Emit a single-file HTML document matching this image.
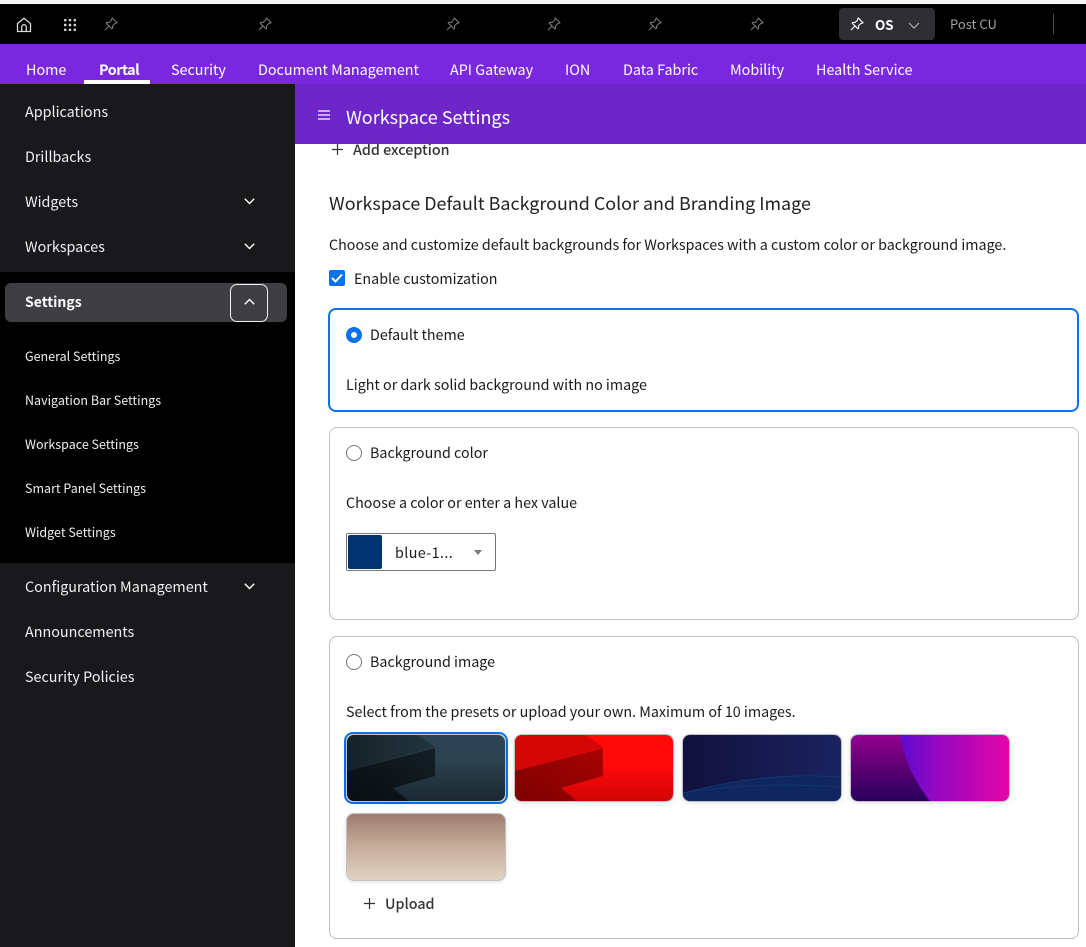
<!DOCTYPE html>
<html><head><meta charset="utf-8">
<style>
html,body{margin:0;padding:0;width:1086px;height:947px;overflow:hidden;background:#fff;}
body{position:relative;font-family:"Noto Sans CJK JP","Liberation Sans",sans-serif;color:#1a1a1e;font-size:14.3px;}
.a{position:absolute;white-space:nowrap;}
.t{position:absolute;white-space:nowrap;line-height:20px;}
svg{position:absolute;overflow:visible;}
.nav{color:#fff;font-size:14.35px;top:60px;}
.side{color:#f0f0f2;font-size:14.35px;}
.sub{color:#f0f0f2;font-size:12.5px;}
.card{position:absolute;left:329px;width:748px;border:1px solid #bfbfc4;border-radius:8px;box-sizing:content-box;background:#fff;}
.radio{position:absolute;width:14px;height:14px;border:1px solid #77777c;border-radius:50%;background:#fff;}
.th{position:absolute;width:158px;height:66px;border:1px solid #c0c0c8;border-radius:8px;box-shadow:0 1px 4px rgba(0,0,0,.12);overflow:hidden;}
.th svg{left:0;top:0;}
</style></head>
<body>
<div class="a" style="left:0;top:0;width:1086px;height:4px;background:#f6f6f6"></div>
<div class="a" style="left:0;top:4px;width:1086px;height:40px;background:#000"></div>
<div class="a" style="left:0;top:44px;width:1086px;height:40px;background:#7a28e0"></div>

<!-- top icons -->
<svg style="left:16px;top:17px" width="16" height="16" viewBox="0 0 16 16" fill="none" stroke="#d8d8d8" stroke-width="1.3"><path d="M1.500 6.500 8 1.200l6.500 5.300V14.500h-13z"/><path d="M5.700 14.500V10a2.300 2.300 0 0 1 4.600 0v4.500"/></svg>
<svg style="left:63px;top:18px" width="14" height="14" viewBox="0 0 14 14" fill="#d8d8d8"><rect x="1" y="1" width="2.400" height="2.400" rx=".6"/><rect x="5.800" y="1" width="2.400" height="2.400" rx=".6"/><rect x="10.600" y="1" width="2.400" height="2.400" rx=".6"/><rect x="1" y="5.800" width="2.400" height="2.400" rx=".6"/><rect x="5.800" y="5.800" width="2.400" height="2.400" rx=".6"/><rect x="10.600" y="5.800" width="2.400" height="2.400" rx=".6"/><rect x="1" y="10.600" width="2.400" height="2.400" rx=".6"/><rect x="5.800" y="10.600" width="2.400" height="2.400" rx=".6"/><rect x="10.600" y="10.600" width="2.400" height="2.400" rx=".6"/></svg>
<svg width="0" height="0"><defs><g id="pin" fill="none" stroke-width="1.1"><path d="M8.300 1 13 5.700l-1 .6-1 0L8.400 9l.3 2-.8.8L2.200 6.100l.8-.8 2 .3L7.700 3V2z"/><path d="M4.800 9.200 1 13"/></g></defs></svg>
<svg style="left:104px;top:17px;stroke:#77777a" width="14" height="14" viewBox="0 0 14 14"><use href="#pin"/></svg>
<svg style="left:258px;top:17px;stroke:#77777a" width="14" height="14" viewBox="0 0 14 14"><use href="#pin"/></svg>
<svg style="left:446px;top:17px;stroke:#77777a" width="14" height="14" viewBox="0 0 14 14"><use href="#pin"/></svg>
<svg style="left:547px;top:17px;stroke:#77777a" width="14" height="14" viewBox="0 0 14 14"><use href="#pin"/></svg>
<svg style="left:648px;top:17px;stroke:#77777a" width="14" height="14" viewBox="0 0 14 14"><use href="#pin"/></svg>
<svg style="left:750px;top:17px;stroke:#77777a" width="14" height="14" viewBox="0 0 14 14"><use href="#pin"/></svg>

<div class="a" style="left:839px;top:8px;width:96px;height:32px;background:#2f2f33;border-radius:4px"></div>
<svg style="left:850px;top:17px;stroke:#fff" width="14" height="14" viewBox="0 0 14 14"><use href="#pin"/></svg>
<div class="t" style="left:875px;top:14px;color:#fff;font-weight:700;font-size:13.500px;letter-spacing:-.3px">OS</div>
<svg style="left:908px;top:22px" width="12" height="8" viewBox="0 0 12 8" fill="none" stroke="#b0b0b4" stroke-width="1.2"><path d="M1 1l5 5 5-5"/></svg>
<div class="t" style="left:950px;top:14px;color:#a4a4a8;font-size:13px">Post CU</div>
<div class="a" style="left:1053px;top:14px;width:1px;height:20px;background:#48484c"></div>

<!-- nav -->
<div class="t nav" style="left:26px">Home</div>
<div class="t nav" style="left:99px;font-weight:700;letter-spacing:-.5px">Portal</div>
<div class="a" style="left:84px;top:80px;width:66px;height:4px;background:#fff"></div>
<div class="t nav" style="left:171px">Security</div>
<div class="t nav" style="left:258px">Document Management</div>
<div class="t nav" style="left:450px">API Gateway</div>
<div class="t nav" style="left:565px">ION</div>
<div class="t nav" style="left:623px">Data Fabric</div>
<div class="t nav" style="left:730px">Mobility</div>
<div class="t nav" style="left:816px">Health Service</div>

<!-- sidebar -->
<div class="a" style="left:0;top:84px;width:295px;height:863px;background:#19191c"></div>
<div class="a" style="left:0;top:272px;width:295px;height:291px;background:#000"></div>
<div class="a" style="left:5px;top:283px;width:282px;height:39px;background:#3e3e43;border-radius:6px"></div>
<div class="a" style="left:230px;top:284px;width:36px;height:36px;border:1px solid #f0f0f0;border-radius:7px"></div>

<div class="t side" style="left:25px;top:102px">Applications</div>
<div class="t side" style="left:25px;top:147px">Drillbacks</div>
<div class="t side" style="left:25px;top:192px">Widgets</div>
<div class="t side" style="left:25px;top:237px">Workspaces</div>
<div class="t side" style="left:25px;top:292px;font-weight:700;color:#fff;font-size:14px">Settings</div>
<div class="t sub" style="left:25px;top:346px">General Settings</div>
<div class="t sub" style="left:25px;top:390px">Navigation Bar Settings</div>
<div class="t sub" style="left:25px;top:434px">Workspace Settings</div>
<div class="t sub" style="left:25px;top:478px">Smart Panel Settings</div>
<div class="t sub" style="left:25px;top:522px">Widget Settings</div>
<div class="t side" style="left:25px;top:577px">Configuration Management</div>
<div class="t side" style="left:25px;top:622px">Announcements</div>
<div class="t side" style="left:25px;top:667px">Security Policies</div>
<svg style="left:244px;top:198px" width="11" height="7" viewBox="0 0 11 7" fill="none" stroke="#fff" stroke-width="1.4"><path d="M.8.8l4.700 4.700L10.200.8"/></svg>
<svg style="left:244px;top:243px" width="11" height="7" viewBox="0 0 11 7" fill="none" stroke="#fff" stroke-width="1.4"><path d="M.8.8l4.700 4.700L10.200.8"/></svg>
<svg style="left:244px;top:583px" width="11" height="7" viewBox="0 0 11 7" fill="none" stroke="#fff" stroke-width="1.4"><path d="M.8.8l4.700 4.700L10.200.8"/></svg>
<svg style="left:244px;top:298px" width="11" height="7" viewBox="0 0 11 7" fill="none" stroke="#fff" stroke-width="1.4"><path d="M.8 6.200 5.500 1.500l4.700 4.700"/></svg>

<!-- header -->
<div class="a" style="left:295px;top:84px;width:791px;height:60px;background:#6d26c7"></div>
<svg style="left:318px;top:110px" width="12" height="10" viewBox="0 0 12 10" stroke="#fff" stroke-width="1.2"><path d="M0 1h12M0 5h12M0 9h12"/></svg>
<div class="t" style="left:346px;top:104px;color:#fff;font-size:18px;line-height:26px">Workspace Settings</div>

<!-- content -->
<svg style="left:332px;top:144px" width="11" height="11" viewBox="0 0 11 11" stroke="#333" stroke-width="1.2"><path d="M5.500 0v11M0 5.500h11"/></svg>
<div class="t" style="left:353px;top:140px;font-weight:500;color:#333;font-size:14.3px">Add exception</div>
<div class="t" style="left:329px;top:191px;font-size:17.9px;line-height:25px;color:#222">Workspace Default Background Color and Branding Image</div>
<div class="t" style="left:329px;top:235px">Choose and customize default backgrounds for Workspaces with a custom color or background image.</div>
<div class="a" style="left:329px;top:270px;width:16px;height:16px;background:#0a72ea;border-radius:2px"></div>
<svg style="left:331px;top:273px" width="12" height="10" viewBox="0 0 12 10" fill="none" stroke="#fff" stroke-width="2"><path d="M1 5l3.500 3.500L11 1.500"/></svg>
<div class="t" style="left:354px;top:269px">Enable customization</div>

<div class="card" style="top:308px;left:328px;width:747px;height:100px;border:2px solid #0a72ea"></div>
<div class="a" style="left:346px;top:327px;width:16px;height:16px;box-sizing:border-box;border:5px solid #0a72ea;border-radius:50%;background:#fff"></div>
<div class="t" style="left:370px;top:325px">Default theme</div>
<div class="t" style="left:346px;top:375px">Light or dark solid background with no image</div>

<div class="card" style="top:427px;height:191px"></div>
<div class="radio" style="left:346px;top:445px"></div>
<div class="t" style="left:370px;top:443px">Background color</div>
<div class="t" style="left:346px;top:493px">Choose a color or enter a hex value</div>
<div class="a" style="left:346px;top:533px;width:148px;height:36px;border:1px solid #77777c;border-radius:2px"></div>
<div class="a" style="left:348px;top:535px;width:34px;height:34px;background:#00336f;border-radius:2px"></div>
<div class="t" style="left:395px;top:543px;letter-spacing:.4px">blue-1...</div>
<svg style="left:474px;top:550px" width="8" height="5" viewBox="0 0 8 5" fill="#77777c"><path d="M0 0h8L4 5z"/></svg>

<div class="card" style="top:636px;height:301px"></div>
<div class="radio" style="left:346px;top:654px"></div>
<div class="t" style="left:370px;top:652px">Background image</div>
<div class="t" style="left:346px;top:702px">Select from the presets or upload your own. Maximum of 10 images.</div>

<div class="a" style="left:344px;top:732px;width:160px;height:68px;border:2px solid #0a72ea;border-radius:9px"></div>
<div class="th" style="left:346px;top:734px">
<svg width="158" height="66" viewBox="0 0 158 66"><defs><linearGradient id="d1" x1="0" y1="0" x2="0" y2="1"><stop offset=".35" stop-color="#2d4351"/><stop offset="1" stop-color="#1a2831"/></linearGradient><linearGradient id="d1b" x1="0" y1="0" x2="1" y2="0"><stop offset="0" stop-color="#172228"/><stop offset="1" stop-color="#22353f"/></linearGradient><linearGradient id="d1c" x1="0" y1="1" x2="1" y2="0"><stop offset="0" stop-color="#080d10"/><stop offset="1" stop-color="#141f26"/></linearGradient></defs><rect width="158" height="66" fill="url(#d1)"/><path d="M0 0H70L88 12 0 36z" fill="url(#d1b)"/><path d="M0 36 88 13V41L46 53 62 66H0z" fill="url(#d1c)"/></svg></div>
<div class="th" style="left:514px;top:734px">
<svg width="158" height="66" viewBox="0 0 158 66"><defs><linearGradient id="d2" x1="0" y1="0" x2="0" y2="1"><stop offset=".45" stop-color="#ff0a0a"/><stop offset=".8" stop-color="#e20707"/><stop offset="1" stop-color="#d00505"/></linearGradient><linearGradient id="d2c" x1="0" y1="1" x2="1" y2="0"><stop offset="0" stop-color="#7c0000"/><stop offset="1" stop-color="#ab0303"/></linearGradient></defs><rect width="158" height="66" fill="url(#d2)"/><path d="M0 0H70L88 12 0 36z" fill="#d40606"/><path d="M0 36 88 13V41L46 53 62 66H0z" fill="url(#d2c)"/></svg></div>
<div class="th" style="left:682px;top:734px">
<svg width="158" height="66" viewBox="0 0 158 66"><defs><linearGradient id="d3" x1="0" y1="0" x2="1" y2="0"><stop offset="0" stop-color="#12103c"/><stop offset="1" stop-color="#1a2360"/></linearGradient></defs><rect width="158" height="66" fill="url(#d3)"/><path d="M0 58C50 45 100 36 158 42V66H0z" fill="#10265e"/><path d="M0 58C50 50 100 48 158 52" fill="none" stroke="#113a74" stroke-width=".8"/><path d="M0 58C50 45 100 38 158 42" fill="none" stroke="#123a76" stroke-width=".8"/></svg></div>
<div class="th" style="left:850px;top:734px">
<svg width="158" height="66" viewBox="0 0 158 66"><defs><linearGradient id="d4" x1="0" y1="0" x2="0" y2="1"><stop offset="0" stop-color="#94008f"/><stop offset="1" stop-color="#27005a"/></linearGradient><linearGradient id="d5" x1="0" y1="0" x2="1" y2="0"><stop offset="0" stop-color="#5d0ad0"/><stop offset=".3" stop-color="#9008c4"/><stop offset="1" stop-color="#e404a8"/></linearGradient></defs><rect width="158" height="66" fill="url(#d4)"/><path d="M49 0C54 28 66 50 79 66H158V0z" fill="url(#d5)"/></svg></div>
<div class="th" style="left:346px;top:813px;background:linear-gradient(180deg,#9e7c6f 0%,#c4a897 45%,#e2d3c4 100%)"></div>

<svg style="left:364px;top:898px" width="11" height="11" viewBox="0 0 11 11" stroke="#333" stroke-width="1.2"><path d="M5.500 0v11M0 5.500h11"/></svg>
<div class="t" style="left:385px;top:894px;font-weight:500;color:#333">Upload</div>
</body></html>
